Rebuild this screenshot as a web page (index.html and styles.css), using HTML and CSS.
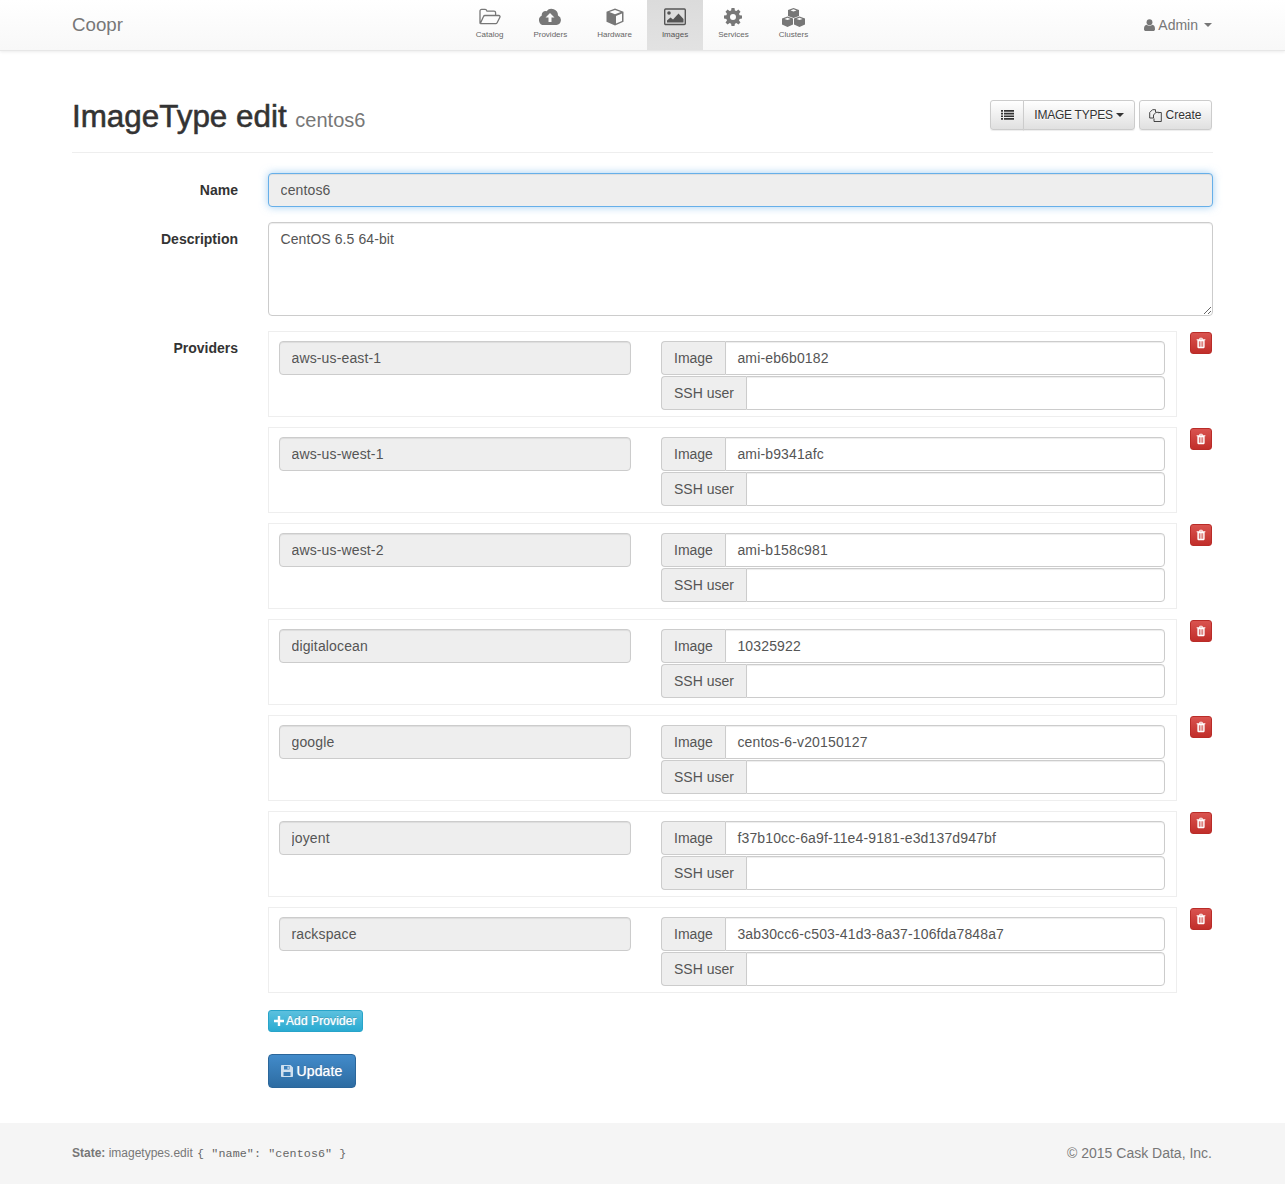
FILE: index.html
```html
<!DOCTYPE html>
<html lang="en">
<head>
<meta charset="utf-8">
<title>Coopr</title>
<link rel="stylesheet" href="styles.css">
</head>
<body>
<svg class="defs" width="0" height="0" aria-hidden="true">
  <symbol id="trash" viewBox="0 0 11 12"><path d="M3.6 2V1.2C3.6.6 4 .3 4.5.3h2c.5 0 .9.3.9.9V2h2.900v1.100h-.8v7.400c0 .7-.4 1.200-1 1.200H2.500c-.6 0-1-.5-1-1.200V3.100H.7V2zM4.500 2h2V1.200h-2zM3.200 4.200v5.900h.9V4.200zm1.900 0v5.900H6V4.200zm1.900 0v5.900h.9V4.200z" fill-rule="evenodd"/></symbol>
</svg>
<header class="navbar">
  <a class="brand">Coopr</a>
  <nav class="tabs">
    <a class="tab">
      <svg class="tab-icon" viewBox="0 0 22 18"><path d="M1 15.500V3a1.600 1.600 0 0 1 1.600-1.600h3.600a1.600 1.600 0 0 1 1.500 1.100l.3.6h7A1.600 1.600 0 0 1 16.600 4.700V7M1.200 15.700 4.500 8.500A1.600 1.600 0 0 1 6 7.500h13.800c1 0 1.500.9 1.100 1.700l-2.800 5.500a1.600 1.600 0 0 1-1.400.9H2.300c-.9 0-1.400-.7-1.100-.9z" fill="none" stroke="#777" stroke-width="1.300"/></svg>
      <span>Catalog</span>
    </a>
    <a class="tab">
      <svg class="tab-icon" viewBox="0 0 22 18"><path d="M5 17A5 5 0 0 1 2.800 7.500 3.700 3.700 0 0 1 7.500 3.300 6.500 6.500 0 0 1 19 7.500 5 5 0 0 1 17.500 17z" fill="#777"/><path d="M11 5l4.500 4.500h-3v4.500h-3V9.500h-3z" fill="#fafafa"/></svg>
      <span>Providers</span>
    </a>
    <a class="tab">
      <svg class="tab-icon" viewBox="0 0 22 18"><path d="M11 .5l8.500 3.200v10L11 17.500 2.500 13.700v-10zM11 2L5.300 4.100 11 6.300l5.700-2.200zM12 7.900v7.700l6-2.700V5.600z" fill="#777" fill-rule="evenodd"/></svg>
      <span>Hardware</span>
    </a>
    <a class="tab is-active">
      <svg class="tab-icon" viewBox="0 0 22 18"><rect x=".7" y="1" width="20.600" height="15.500" rx="1" fill="none" stroke="#555" stroke-width="1.400"/><circle cx="5" cy="5" r="1.800" fill="#555"/><path d="M3 14.500v-2l3.500-3 2.500 2 5.500-6 5 5.500v3.500z" fill="#555"/></svg>
      <span>Images</span>
    </a>
    <a class="tab">
      <svg class="tab-icon" viewBox="0 0 22 18"><path fill="#777" fill-rule="evenodd" d="M9.500 0h3l.4 2.500 1.500.6 2-1.500 2.100 2.100-1.500 2 .6 1.500 2.400.4v3l-2.400.4-.6 1.500 1.500 2-2.100 2.100-2-1.500-1.500.6-.4 2.300h-3l-.4-2.300-1.500-.6-2 1.500-2.100-2.100 1.500-2-.6-1.500-2.400-.4v-3l2.400-.4.6-1.500-1.500-2 2.100-2.100 2 1.500 1.500-.6zM11 6a3 3 0 1 0 0 6 3 3 0 0 0 0-6z"/></svg>
      <span>Services</span>
    </a>
    <a class="tab">
      <svg class="tab-icon tab-icon-wide" viewBox="0 0 25 19"><path fill="#777" fill-rule="evenodd" d="M12.500 0l5.500 2v6l-5.500 2L7 8V2zM12.500 1.300L9.500 2.400l3 1.100 3-1.100zM6.500 8.500L12 10.500v6L6.500 19 1 16.500v-6zM6.500 9.800l-3 1.100 3 1.100 3-1.100zM18.500 8.500l5.500 2v6L18.500 19 13 16.500v-6zM18.500 9.800l-3 1.100 3 1.100 3-1.100z"/></svg>
      <span>Clusters</span>
    </a>
  </nav>
  <a class="user">
    <svg class="user-icon" viewBox="0 0 12 13"><circle cx="6" cy="3.500" r="3.200" fill="#777"/><path d="M0 11c0-3 1-4.500 2.800-4.800C3.700 7 4.800 7.300 6 7.300s2.300-.3 3.200-1.100C11 6.500 12 8 12 11c0 1.300-.8 2-2 2H2c-1.200 0-2-.7-2-2z" fill="#777"/></svg>
    Admin <span class="caret"></span>
  </a>
</header>

<main class="page">
  <div class="page-header">
    <h1 class="title">ImageType edit <small class="subtitle">centos6</small></h1>
    <div class="actions">
      <div class="btn-group">
        <a class="btn btn-icon">
          <svg class="icon-list" viewBox="0 0 13 10"><path d="M0 0h2v1.700H0zM3 0h10v1.700H3zM0 2.700h2v1.700H0zM3 2.700h10v1.700H3zM0 5.400h2v1.700H0zM3 5.400h10v1.700H3zM0 8.100h2v1.700H0zM3 8.100h10v1.700H3z" fill="#333"/></svg>
        </a>
        <a class="btn btn-types">IMAGE TYPES <span class="caret caret-dark"></span></a>
      </div>
      <a class="btn btn-create">
        <svg class="icon-copy" viewBox="0 0 13 13"><path d="M4.500 9H.7V3.500L3.500.7h3v2.600M4.500 9V6L7 3.300h2.800v1M9.800 3.500h2.500v9H5v-3" fill="none" stroke="#333" stroke-width=".9"/></svg>
        Create
      </a>
    </div>
  </div>

  <form class="form">
    <div class="form-row">
      <label class="form-label">Name</label>
      <input class="control control-readonly control-focus" value="centos6" readonly>
    </div>
    <div class="form-row">
      <label class="form-label">Description</label>
      <textarea class="control control-area">CentOS 6.5 64-bit</textarea>
    </div>
    <div class="form-row form-row-providers">
      <label class="form-label">Providers</label>
      <div class="providers">
        <div class="provider">
          <div class="provider-box">
            <input class="control control-readonly provider-name" value="aws-us-east-1" readonly>
            <div class="provider-fields">
              <div class="input-group"><span class="addon">Image</span><input class="control group-input" value="ami-eb6b0182"></div>
              <div class="input-group"><span class="addon">SSH user</span><input class="control group-input"></div>
            </div>
          </div>
          <a class="btn-delete"><svg class="icon-trash"><use href="#trash"/></svg></a>
        </div>
        <div class="provider">
          <div class="provider-box">
            <input class="control control-readonly provider-name" value="aws-us-west-1" readonly>
            <div class="provider-fields">
              <div class="input-group"><span class="addon">Image</span><input class="control group-input" value="ami-b9341afc"></div>
              <div class="input-group"><span class="addon">SSH user</span><input class="control group-input"></div>
            </div>
          </div>
          <a class="btn-delete"><svg class="icon-trash"><use href="#trash"/></svg></a>
        </div>
        <div class="provider">
          <div class="provider-box">
            <input class="control control-readonly provider-name" value="aws-us-west-2" readonly>
            <div class="provider-fields">
              <div class="input-group"><span class="addon">Image</span><input class="control group-input" value="ami-b158c981"></div>
              <div class="input-group"><span class="addon">SSH user</span><input class="control group-input"></div>
            </div>
          </div>
          <a class="btn-delete"><svg class="icon-trash"><use href="#trash"/></svg></a>
        </div>
        <div class="provider">
          <div class="provider-box">
            <input class="control control-readonly provider-name" value="digitalocean" readonly>
            <div class="provider-fields">
              <div class="input-group"><span class="addon">Image</span><input class="control group-input" value="10325922"></div>
              <div class="input-group"><span class="addon">SSH user</span><input class="control group-input"></div>
            </div>
          </div>
          <a class="btn-delete"><svg class="icon-trash"><use href="#trash"/></svg></a>
        </div>
        <div class="provider">
          <div class="provider-box">
            <input class="control control-readonly provider-name" value="google" readonly>
            <div class="provider-fields">
              <div class="input-group"><span class="addon">Image</span><input class="control group-input" value="centos-6-v20150127"></div>
              <div class="input-group"><span class="addon">SSH user</span><input class="control group-input"></div>
            </div>
          </div>
          <a class="btn-delete"><svg class="icon-trash"><use href="#trash"/></svg></a>
        </div>
        <div class="provider">
          <div class="provider-box">
            <input class="control control-readonly provider-name" value="joyent" readonly>
            <div class="provider-fields">
              <div class="input-group"><span class="addon">Image</span><input class="control group-input" value="f37b10cc-6a9f-11e4-9181-e3d137d947bf"></div>
              <div class="input-group"><span class="addon">SSH user</span><input class="control group-input"></div>
            </div>
          </div>
          <a class="btn-delete"><svg class="icon-trash"><use href="#trash"/></svg></a>
        </div>
        <div class="provider">
          <div class="provider-box">
            <input class="control control-readonly provider-name" value="rackspace" readonly>
            <div class="provider-fields">
              <div class="input-group"><span class="addon">Image</span><input class="control group-input" value="3ab30cc6-c503-41d3-8a37-106fda7848a7"></div>
              <div class="input-group"><span class="addon">SSH user</span><input class="control group-input"></div>
            </div>
          </div>
          <a class="btn-delete"><svg class="icon-trash"><use href="#trash"/></svg></a>
        </div>
        <a class="btn-add"><svg class="icon-plus" viewBox="0 0 10 10"><path d="M3.800 0h2.400v3.800H10v2.400H6.200V10H3.800V6.200H0V3.800h3.800z" fill="#fff"/></svg>Add Provider</a>
        <a class="btn-update"><svg class="icon-save" viewBox="0 0 12 12"><path fill="#cfe0ef" fill-rule="evenodd" d="M.8 0h8.700L12 2.500v8.700c0 .5-.3.800-.8.800H.8c-.5 0-.8-.3-.8-.8V.8C0 .3.300 0 .8 0zM3 1v3.500h5.500V1zM6.500 1.400h1.300v2.500H6.500zM2.500 7v4h7V7z"/></svg>Update</a>
      </div>
    </div>
  </form>
</main>

<footer class="footer">
  <div class="state"><b>State:</b> imagetypes.edit <code class="params">{ "name": "centos6" }</code></div>
  <div class="copyright">© 2015 Cask Data, Inc.</div>
</footer>
</body>
</html>
```
FILE: styles.css
```css
* { box-sizing: border-box; }
html, body { margin: 0; padding: 0; }
body {
  font-family: "Liberation Sans", Arial, sans-serif;
  font-size: 14px;
  line-height: 20px;
  color: #333;
  background: #fff;
}
.defs { position: absolute; }

.navbar {
  display: grid;
  grid-template-columns: 1fr auto 1fr;
  align-items: center;
  height: 51px;
  padding: 0 73px 0 72px;
  background: linear-gradient(to bottom, #fff, #f8f8f8);
  border-bottom: 1px solid #e7e7e7;
  box-shadow: 0 1px 3px rgba(0, 0, 0, .08);
}
.brand { font-size: 18.7px; color: #777; }
.tabs { display: flex; height: 50px; }
.tab {
  display: flex;
  flex-direction: column;
  align-items: center;
  padding: 8px 15px 0;
  color: #666;
  font-size: 8px;
  line-height: 10px;
}
.tab span { margin-top: 4px; white-space: nowrap; }
.tab-icon { width: 22px; height: 18px; display: block; }
.tab-icon-wide { width: 25px; height: 19px; margin-bottom: -1px; }
.tab.is-active {
  background: linear-gradient(to bottom, #dbdbdb, #e2e2e2);
  color: #555;
}
.user {
  justify-self: end;
  display: flex;
  align-items: center;
  color: #777;
}
.user-icon { width: 11px; height: 12px; margin-right: 3px; }
.caret {
  display: inline-block;
  width: 0;
  height: 0;
  margin-left: 6px;
  border-top: 4px solid #777;
  border-left: 4px solid transparent;
  border-right: 4px solid transparent;
}
.caret-dark { border-top-color: #333; margin-left: 0; vertical-align: middle; }

.page { padding: 49px 72px 0 72px; }
.page-header {
  display: flex;
  justify-content: space-between;
  align-items: flex-start;
  height: 53px;
  border-bottom: 1px solid #eee;
}
.title {
  margin: 0;
  font-size: 31.4px;
  line-height: 34px;
  font-weight: 500;
  color: #333;
  white-space: nowrap;
  -webkit-text-stroke: .55px #333;
}
.subtitle {
  font-size: 20px;
  font-weight: 400;
  color: #777;
  -webkit-text-stroke: 0;
}
.actions { display: flex; gap: 4px; margin-right: 1px; }
.btn-group { display: flex; }
.btn {
  display: flex;
  align-items: center;
  justify-content: center;
  height: 30px;
  font-size: 12px;
  line-height: 18px;
  color: #333;
  background: linear-gradient(to bottom, #fff, #e0e0e0);
  border: 1px solid #ccc;
  border-radius: 3px;
  text-shadow: 0 1px 0 #fff;
  box-shadow: inset 0 1px 0 rgba(255, 255, 255, .15), 0 1px 1px rgba(0, 0, 0, .075);
  white-space: nowrap;
}
.btn-icon { width: 34px; border-radius: 3px 0 0 3px; }
.btn-types { width: 112px; margin-left: -1px; border-radius: 0 3px 3px 0; gap: 3px; letter-spacing: -.25px; }
.btn-create { width: 73px; gap: 3px; }
.icon-list { width: 13px; height: 10px; }
.icon-copy { width: 13px; height: 13px; }

.form { padding-top: 20px; }
.form-row {
  display: grid;
  grid-template-columns: 166px 1fr;
  column-gap: 30px;
  margin-bottom: 15px;
}
.form-row-providers { margin-bottom: 0; }
.form-label {
  padding-top: 7px;
  font-weight: 700;
  text-align: right;
  color: #333;
}
.control {
  display: block;
  width: 100%;
  height: 34px;
  padding: 6px 12px 6px 11.5px;
  font-family: inherit;
  font-size: 14px;
  line-height: 20px;
  letter-spacing: .14px;
  color: #555;
  background: #fff;
  border: 1px solid #ccc;
  border-radius: 4px;
  box-shadow: inset 0 1px 1px rgba(0, 0, 0, .075);
  outline: none;
}
.control-readonly { background: #eee; }
.control-focus {
  border-color: #66afe9;
  box-shadow: inset 0 1px 1px rgba(0, 0, 0, .075), 0 0 8px rgba(102, 175, 233, .6);
}
.control-area { height: 94px; padding-top: 6px; letter-spacing: .08px; }

.provider { display: flex; gap: 13px; margin-bottom: 10px; align-items: flex-start; }
.provider-box {
  display: flex;
  width: 909px;
  height: 86px;
  padding: 9px 11px 0 10px;
  border: 1px solid #eee;
}
.provider-name { width: 352px; flex: none; }
.provider-fields {
  flex: 1;
  margin-left: 30px;
  display: flex;
  flex-direction: column;
  gap: 1px;
}
.input-group { display: flex; height: 34px; }
.addon {
  flex: none;
  padding: 6px 12px;
  color: #555;
  background: #eee;
  border: 1px solid #ccc;
  border-right: 0;
  border-radius: 4px 0 0 4px;
  white-space: nowrap;
}
.group-input { flex: 1; min-width: 0; border-radius: 0 4px 4px 0; }
.btn-delete {
  display: flex;
  align-items: center;
  justify-content: center;
  width: 22px;
  height: 22px;
  margin-top: 1px;
  background: linear-gradient(to bottom, #d9534f, #c12e2a);
  border: 1px solid #b92c28;
  border-radius: 3px;
}
.icon-trash { width: 10px; height: 12px; fill: #fff; }

.btn-add {
  display: flex;
  align-items: center;
  width: 95px;
  height: 22px;
  margin-top: 17px;
  padding-left: 5px;
  color: #fff;
  font-size: 12px;
  line-height: 18px;
  letter-spacing: .1px;
  background: linear-gradient(to bottom, #5bc0de, #2aabd2);
  border: 1px solid #28a4c9;
  border-radius: 3px;
  text-shadow: 0 0 1px rgba(255, 255, 255, .8), 0 -1px 0 rgba(0, 0, 0, .2);
  white-space: nowrap;
}
.icon-plus { width: 10px; height: 10px; margin-right: 2px; }
.btn-update {
  display: flex;
  align-items: center;
  justify-content: center;
  width: 88px;
  height: 34px;
  margin-top: 22px;
  color: #fff;
  letter-spacing: .15px;
  background: linear-gradient(to bottom, #428bca, #2d6ca2);
  border: 1px solid #2b669a;
  border-radius: 4px;
  text-shadow: 0 0 1px rgba(255, 255, 255, .8), 0 -1px 0 rgba(0, 0, 0, .2);
}
.icon-save { width: 12px; height: 12px; margin-right: 3px; }

.footer {
  display: flex;
  justify-content: space-between;
  align-items: center;
  height: 61px;
  margin-top: 35px;
  padding: 0 73px 0 72px;
  background: #f5f5f5;
  color: #777;
}
.state { font-size: 12px; }
.params { font-family: "Liberation Mono", monospace; font-size: 11.7px; letter-spacing: .1px; color: #666; margin-left: 1px; }
.copyright { font-size: 14px; padding-bottom: 1px; }
```
